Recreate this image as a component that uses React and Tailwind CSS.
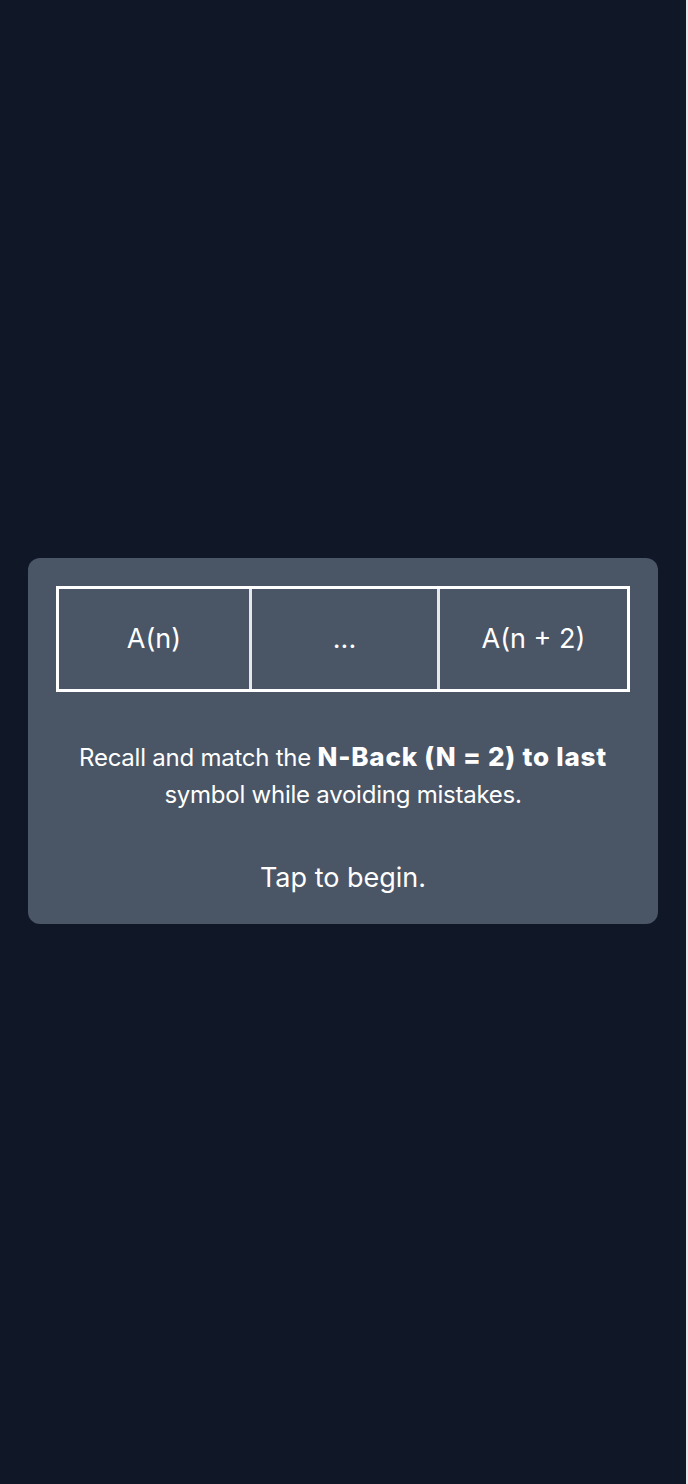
import React from "react";

const cells = ["A(n)", "...", "A(n + 2)"];

const App = () => {
  return (
    <div className="min-h-screen bg-gray-200">
      <div
        className="flex min-h-screen w-[686px] items-center justify-center bg-gray-900 px-7 pb-0.5"
        style={{ fontFamily: "Inter, 'Noto Sans', sans-serif" }}
      >
        <div className="w-full rounded-xl bg-gray-600 px-7 pt-7 pb-[28px] text-white">
          <div className="flex h-[106px] border-[3px] border-white">
            <div className="flex w-[190px] items-center justify-center text-[27px]">{cells[0]}</div>
            <div className="flex w-[191px] items-center justify-center border-x-[3px] border-gray-200 text-[27px]">
              {cells[1]}
            </div>
            <div className="flex flex-1 items-center justify-center text-[27px]">{cells[2]}</div>
          </div>
          <p className="mt-[46px] text-center text-2xl leading-[37px] tracking-[-0.01em]">
            Recall and match the{" "}
            <span className="text-[26px] font-extrabold tracking-[0.03em]">N-Back (N = 2) to last</span>{" "}
            symbol while avoiding mistakes.
          </p>
          <p className="mt-[46px] text-center text-[27px] leading-[37px]">Tap to begin.</p>
        </div>
      </div>
    </div>
  );
};

export default App;
